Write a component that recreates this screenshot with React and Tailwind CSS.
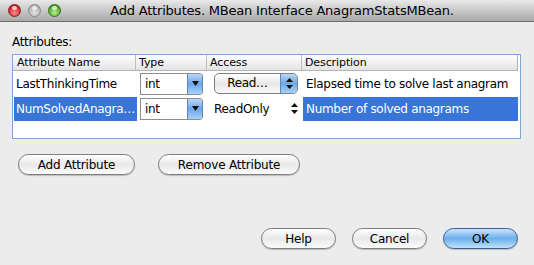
import React from "react";

const font = { fontFamily: '"DejaVu Sans", "Liberation Sans", sans-serif' };

function Light({ from, to, border }) {
  return (
    <div
      className={`w-[13px] h-[13px] rounded-full border ${border} relative overflow-hidden`}
      style={{ background: `radial-gradient(circle at 50% 70%, ${to} 0%, ${from} 80%)` }}
    >
      <div className="absolute left-[3px] top-[1px] w-[5px] h-[4px] rounded-full bg-white/70" />
    </div>
  );
}

function DownArrowBtn() {
  return (
    <div className="w-[15px] h-full rounded-r-[4px] border-l border-[#5f83b9] bg-gradient-to-b from-[#b9d6f5] via-[#6ea6e6] to-[#a6d2fb] flex items-center justify-center">
      <svg width="7" height="5" viewBox="0 0 7 5"><path d="M0 0h7L3.5 5z" fill="#111" /></svg>
    </div>
  );
}

function Combo() {
  return (
    <div className="w-[63px] h-[22px] flex border border-[#8e8e8e] border-r-[#5f83b9] rounded-r-[4px] bg-white">
      <div className="flex-1 pl-[4px] text-[12px] leading-[20px] text-black">int</div>
      <DownArrowBtn />
    </div>
  );
}

function Stepper({ color = "#111" }) {
  return (
    <svg width="7" height="11" viewBox="0 0 7 11">
      <path d="M0 4h7L3.5 0z" fill={color} />
      <path d="M0 7h7L3.5 11z" fill={color} />
    </svg>
  );
}

function PillBtn({ children, w, blue }) {
  return (
    <div
      className={`${w} h-[21px] rounded-full border flex items-center justify-center text-[12px] tracking-[-0.2px] text-black ${
        blue
          ? "border-[#3d5e95] bg-gradient-to-b from-[#c9e3fb] via-[#6bb0ec] to-[#bfe1fb]"
          : "border-[#7d7d7d] bg-gradient-to-b from-[#ffffff] via-[#e9e9e9] to-[#fbfbfb]"
      } shadow-[0_1px_1px_rgba(0,0,0,0.2)]`}
    >
      {children}
    </div>
  );
}

export default function App() {
  return (
    <div className="w-[534px] h-[265px] bg-[#ececec] flex flex-col overflow-hidden" style={font}>
      {/* Title bar */}
      <div className="h-[22px] shrink-0 flex items-center relative bg-gradient-to-b from-[#e9e9e9] to-[#a9a9a9] border-b border-[#6e6e6e]">
        <div className="flex items-center gap-[7px] pl-[8px]">
          <Light from="#c4141a" to="#ff8a8a" border="border-[#8a1b1b]" />
          <Light from="#a8a8a8" to="#e4e4e4" border="border-[#8a8a8a]" />
          <Light from="#3b9b16" to="#b4f08a" border="border-[#2f6d17]" />
        </div>
        <div className="absolute inset-0 flex items-center justify-center pl-[30px] text-[13px] tracking-[-0.2px] text-black">
          Add Attributes. MBean Interface AnagramStatsMBean.
        </div>
      </div>

      {/* Body */}
      <div className="flex flex-col pl-[12px] pr-[13px] tracking-[-0.3px]">
        <div className="mt-[13px] text-[12px] leading-[15px] text-black">Attributes:</div>
        <div className="mt-[4px] h-[85px] border border-[#7ea7d8] bg-white flex flex-col">
          {/* header */}
          <div className="h-[16px] flex bg-gradient-to-b from-[#ffffff] to-[#e3e3e3] border-b border-[#b5b5b5] text-[11px] leading-[15px] text-black mr-[2px] border-r tracking-[-0.1px]">
            <div className="w-[123px] pl-[4px] border-r border-[#bdbdbd]">Attribute Name</div>
            <div className="w-[71px] pl-[3px] border-r border-[#bdbdbd]">Type</div>
            <div className="w-[95px] pl-[3px] border-r border-[#bdbdbd]">Access</div>
            <div className="flex-1 pl-[3px]">Description</div>
          </div>
          {/* row 1 */}
          <div className="h-[25px] flex items-center text-[12px] text-black">
            <div className="w-[124px] pl-[3px]">LastThinkingTime</div>
            <div className="w-[71px] pl-[3px]"><Combo /></div>
            <div className="w-[95px] pl-[6px]">
              <div className="w-[84px] h-[21px] flex rounded-[5px] border border-[#7f7f7f] bg-gradient-to-b from-[#ffffff] via-[#e8e8e8] to-[#f8f8f8] overflow-hidden">
                <div className="flex-1 text-center leading-[19px]">Read…</div>
                <div className="w-[17px] h-full border-l border-[#5f83b9] bg-gradient-to-b from-[#b9d6f5] via-[#6ea6e6] to-[#a6d2fb] flex items-center justify-center">
                  <Stepper />
                </div>
              </div>
            </div>
            <div className="flex-1 pl-[3px]">Elapsed time to solve last anagram</div>
          </div>
          {/* row 2 */}
          <div className="h-[25px] flex items-center text-[12px]">
            <div className="w-[124px] h-[24px] pl-[1px]">
              <div className="h-full bg-[#3875d7] text-white pl-[2px] leading-[24px] whitespace-nowrap">NumSolvedAnagra…</div>
            </div>
            <div className="w-[71px] pl-[3px]"><Combo /></div>
            <div className="w-[95px] pl-[6px] flex items-center text-black">
              <span className="w-[77px]">ReadOnly</span>
              <Stepper />
            </div>
            <div className="flex-1 h-[24px] pr-[2px]">
              <div className="h-full bg-[#3875d7] text-white pl-[3px] leading-[24px] whitespace-nowrap">Number of solved anagrams</div>
            </div>
          </div>
        </div>

        <div className="mt-[15px] flex gap-[23px] pl-[6px]">
          <PillBtn w="w-[117px]">Add Attribute</PillBtn>
          <PillBtn w="w-[142px]">Remove Attribute</PillBtn>
        </div>

        <div className="mt-[53px] flex justify-end gap-[16px] pr-[3px]">
          <PillBtn w="w-[75px]">Help</PillBtn>
          <PillBtn w="w-[75px]">Cancel</PillBtn>
          <PillBtn w="w-[75px]" blue>OK</PillBtn>
        </div>
      </div>
    </div>
  );
}
